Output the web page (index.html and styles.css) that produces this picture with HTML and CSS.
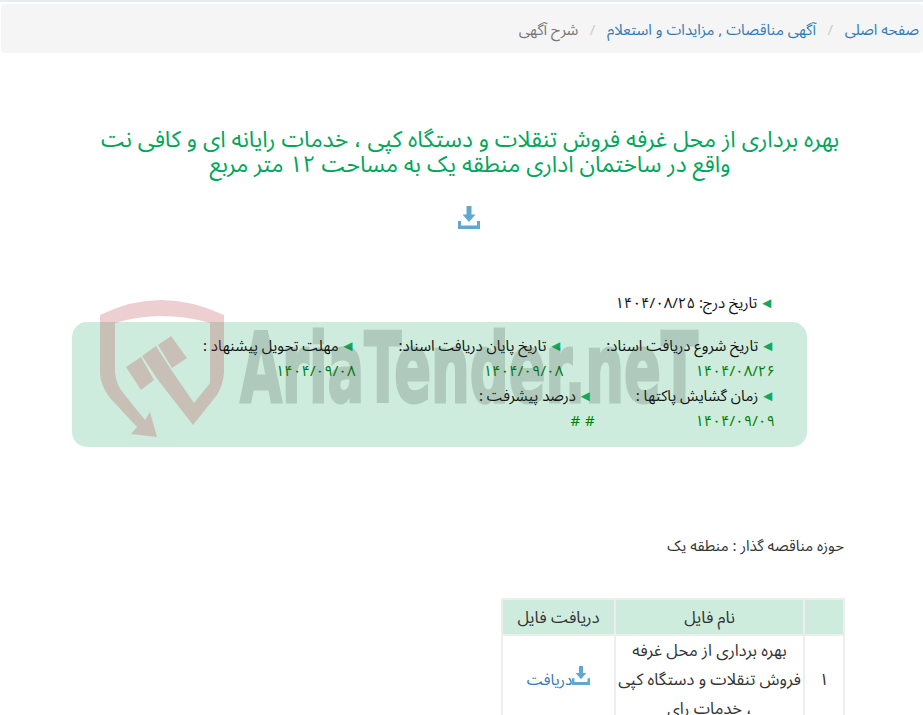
FILE: index.html
```html
<!DOCTYPE html>
<html lang="fa" dir="rtl">
<head>
    <meta charset="UTF-8">
    <title>شرح آگهی</title>
    <link rel="stylesheet" href="styles.css">
</head>
<body>

<div class="top-line"></div>

<ol class="breadcrumb">
    <li><a href="#">صفحه اصلی</a></li>
    <li><a href="#">آگهی مناقصات , مزایدات و استعلام</a></li>
    <li class="active">شرح آگهی</li>
</ol>

<div class="page">
    <h1 class="title">بهره برداری از محل غرفه فروش تنقلات و دستگاه کپی ، خدمات رایانه ای و کافی نت واقع در ساختمان اداری منطقه یک به مساحت ۱۲ متر مربع</h1>

    <div class="download-top">
        <svg class="icon-dl big" viewBox="0 0 22 23"><path d="M8.5 0h5v8.500h4l-6.500 7.500-6.500-7.500h4z"/><path d="M0 15h3v4.500h16v-4.500h3v8H0z"/></svg>
    </div>

    <div class="date-line"><span class="arrow">◄</span> تاریخ درج: ۱۴۰۴/۰۸/۲۵</div>

    <div class="info-wrap">
        <div class="info-box">
            <div class="row">
                <div class="cell">
                    <div class="label"><span class="arrow">◄</span> تاریخ شروع دریافت اسناد:</div>
                    <div class="value">۱۴۰۴/۰۸/۲۶</div>
                </div>
                <div class="cell">
                    <div class="label"><span class="arrow">◄</span> تاریخ پایان دریافت اسناد:</div>
                    <div class="value">۱۴۰۴/۰۹/۰۸</div>
                </div>
                <div class="cell">
                    <div class="label"><span class="arrow">◄</span> مهلت تحویل پیشنهاد :</div>
                    <div class="value">۱۴۰۴/۰۹/۰۸</div>
                </div>
            </div>
            <div class="row">
                <div class="cell">
                    <div class="label"><span class="arrow">◄</span> زمان گشایش پاکتها :</div>
                    <div class="value">۱۴۰۴/۰۹/۰۹</div>
                </div>
                <div class="cell">
                    <div class="label"><span class="arrow">◄</span> درصد پیشرفت :</div>
                    <div class="value hash"># #</div>
                </div>
            </div>
        </div>

        <svg class="watermark" viewBox="90 295 610 150">
            <path class="shield" d="M100 315Q160 285 224 315L224 373Q223 385 217 395L193 425 158 380 172 371 194 403 210 383Q210 378 210 372L210 323Q162 309 115 323L115 372Q116 385 124 394L145 420 150 412 157 437 131 434 137 427 110 398Q100 385 100 372Z"/>
            <path class="shield" d="M126 367 141 357 154 380 141 390Z"/>
            <path class="shield" d="M142 356 156 346 172 371 158 380Z"/>
            <path class="shield" d="M158 345 171 336 187 358 172 368Z"/>
            <text class="wm-text" x="240" y="402" textLength="458" lengthAdjust="spacingAndGlyphs">AriaTender.neT</text>
        </svg>
    </div>

    <div class="org">حوزه مناقصه گذار : منطقه یک</div>

    <table class="files">
        <thead>
            <tr><th class="num"></th><th class="name">نام فایل</th><th class="get">دریافت فایل</th></tr>
        </thead>
        <tbody>
            <tr>
                <td class="num">۱</td>
                <td class="name">بهره برداری از محل غرفه فروش تنقلات و دستگاه کپی ، خدمات رای</td>
                <td class="get"><a href="#"><svg class="icon-dl small" viewBox="0 0 22 23"><path d="M8.5 0h5v8.500h4l-6.500 7.500-6.500-7.500h4z"/><path d="M0 15h3v4.500h16v-4.500h3v8H0z"/></svg>دریافت</a></td>
            </tr>
        </tbody>
    </table>
</div>

</body>
</html>
```

FILE: styles.css
```css
html, body {
    height: 715px;
    overflow: hidden;
}
body {
    margin: 0;
    font-family: "Noto Sans Arabic", "Noto Sans", sans-serif;
    font-size: 15px;
    color: #333;
    background-color: #fff;
}
a {
    color: #337ab7;
    text-decoration: none;
}
.top-line {
    height: 2px;
    background-color: #e9ecef;
}
.breadcrumb {
    display: flex;
    list-style: none;
    height: 49px;
    box-sizing: border-box;
    margin: 2px 0 0 1px;
    padding: 16px 4px 0 0;
    background-color: #f5f5f5;
    border-radius: 4px;
    line-height: 20px;
}
.breadcrumb li + li::before {
    content: "/";
    color: #ccc;
    padding: 0 11.5px;
}
.breadcrumb .active {
    color: #777;
}
.title {
    width: 746px;
    margin: 75px 80px 0 0;
    font-size: 22.8px;
    font-weight: normal;
    line-height: 25px;
    color: #00a65a;
    text-align: center;
}
.download-top {
    margin: 28px 0 0 0;
    padding-right: 443px;
    height: 24px;
}
.icon-dl {
    fill: #5ea9cd;
}
.icon-dl.big {
    width: 22px;
    height: 23px;
}
.icon-dl.small {
    width: 18px;
    height: 19px;
    vertical-align: 0;
}
.date-line {
    margin: 63px 149px 0 0;
    color: #111;
    line-height: 20px;
}
.arrow {
    margin-left: -2px;
    color: #14a85f;
}
.info-wrap {
    position: relative;
    width: 735px;
    margin: 9px 116px 0 0;
}
.info-box {
    height: 125px;
    box-sizing: border-box;
    padding: 14px 32px 0 0;
    background-color: #cdecdd;
    border-radius: 15px;
}
.row {
    display: flex;
    gap: 43px;
    height: 50px;
}
.label {
    color: #111;
    line-height: 20px;
}
.value {
    color: #008000;
    line-height: 30px;
}
.value.hash {
    margin-right: -2px;
    word-spacing: 1px;
}
.watermark {
    position: absolute;
    left: 18px;
    top: -27px;
    width: 610px;
    height: 150px;
    overflow: visible;
}
.shield {
    fill: rgba(183, 54, 63, 0.24);
}
.wm-text {
    direction: ltr;
    font-family: "DejaVu Sans", sans-serif;
    font-weight: bold;
    font-size: 96px;
    fill: #3c4641;
    stroke: #3c4641;
    stroke-width: 3px;
    opacity: 0.2;
}
.org {
    margin: 89px 79px 0 0;
    line-height: 20px;
}
.files {
    margin: 42px 78px 0 0;
    width: 342px;
    border-collapse: collapse;
    table-layout: fixed;
    font-size: 16.5px;
    line-height: 29px;
}
.files th, .files td {
    border: 2px solid #eee;
    font-weight: normal;
    text-align: center;
}
.files th {
    height: 34px;
    background-color: #cdecdd;
    padding: 0;
}
.files td {
    padding: 0 2px;
}
.files .num {
    width: 38px;
}
.files .name {
    width: 187px;
}
.files .get {
    width: 111px;
}
.files .get a {
    font-size: 15.5px;
}
```
